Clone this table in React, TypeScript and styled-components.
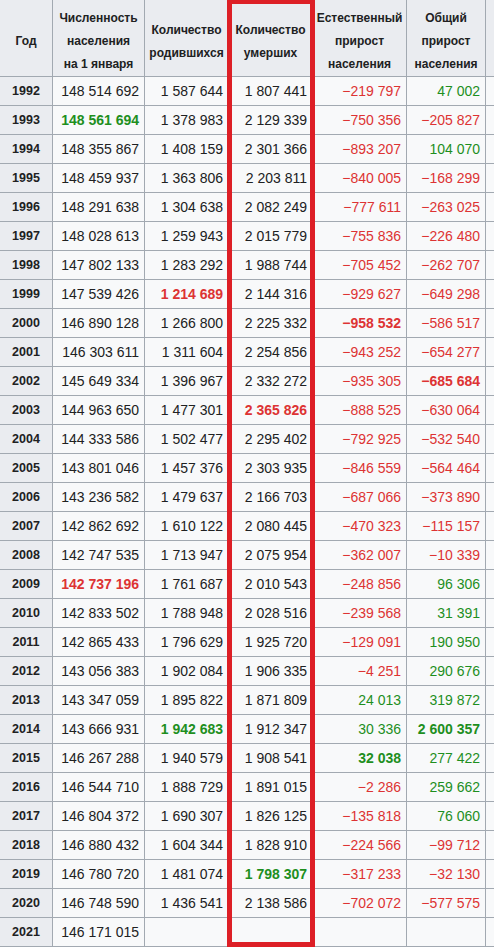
import React from 'react';
import styled, { createGlobalStyle } from 'styled-components';

const GlobalStyle = createGlobalStyle`
  html, body {
    margin: 0;
    padding: 0;
    background: #fff;
    overflow: hidden;
  }
  body {
    font-family: "Liberation Sans", Arial, sans-serif;
    color: #202122;
  }
`;

const Page = styled.div`
  position: relative;
  width: 494px;
  height: 948px;
  overflow: hidden;
`;

const Table = styled.div`
  display: grid;
  grid-template-columns: 52px 91px 83px 83px 93px 78px 90px;
  grid-template-rows: 76px;
  grid-auto-rows: 28px;
  gap: 1px;
  width: max-content;
  background: #a2a9b1;
  border: 1px solid #a2a9b1;
  margin: -1px 0 0 -1px;
`;

const HeadCell = styled.div`
  display: flex;
  align-items: center;
  justify-content: center;
  padding: 7px 4px 0;
  background: #eaecf0;
  font-size: 12px;
  font-weight: 700;
  line-height: 23px;
  text-align: center;
  white-space: nowrap;
`;

const YearCell = styled.div`
  display: flex;
  align-items: center;
  justify-content: center;
  background: #eaecf0;
  font-size: 12.5px;
  font-weight: 700;
`;

const NumCell = styled.div<{ $tone?: 'red' | 'green'; $bold?: boolean }>`
  display: flex;
  align-items: center;
  justify-content: flex-end;
  padding: 0 5px;
  background: #f8f9fa;
  font-size: 14px;
  white-space: nowrap;
  font-weight: ${p => (p.$bold ? 700 : 400)};
  color: ${p => (p.$tone === 'red' ? '#d33' : p.$tone === 'green' ? '#1e8f1e' : '#202122')};
`;

// annotation drawn over the deaths column
const Highlight = styled.div`
  position: absolute;
  left: 227px;
  top: -1px;
  width: 88px;
  height: 948px;
  box-sizing: border-box;
  border: 5px solid #dd1f26;
  pointer-events: none;
`;

const headers: string[][] = [
  ['Год'],
  ['Численность', 'населения', 'на 1 января'],
  ['Количество', 'родившихся'],
  ['Количество', 'умерших'],
  ['Естественный', 'прирост', 'населения'],
  ['Общий', 'прирост', 'населения'],
  [],
];

// "!g" / "!r" prefix = bold green / bold red
const rows: string[][] = [
  ['1992', '148 514 692', '1 587 644', '1 807 441', '−219 797', '47 002'],
  ['1993', '!g148 561 694', '1 378 983', '2 129 339', '−750 356', '−205 827'],
  ['1994', '148 355 867', '1 408 159', '2 301 366', '−893 207', '104 070'],
  ['1995', '148 459 937', '1 363 806', '2 203 811', '−840 005', '−168 299'],
  ['1996', '148 291 638', '1 304 638', '2 082 249', '−777 611', '−263 025'],
  ['1997', '148 028 613', '1 259 943', '2 015 779', '−755 836', '−226 480'],
  ['1998', '147 802 133', '1 283 292', '1 988 744', '−705 452', '−262 707'],
  ['1999', '147 539 426', '!r1 214 689', '2 144 316', '−929 627', '−649 298'],
  ['2000', '146 890 128', '1 266 800', '2 225 332', '!r−958 532', '−586 517'],
  ['2001', '146 303 611', '1 311 604', '2 254 856', '−943 252', '−654 277'],
  ['2002', '145 649 334', '1 396 967', '2 332 272', '−935 305', '!r−685 684'],
  ['2003', '144 963 650', '1 477 301', '!r2 365 826', '−888 525', '−630 064'],
  ['2004', '144 333 586', '1 502 477', '2 295 402', '−792 925', '−532 540'],
  ['2005', '143 801 046', '1 457 376', '2 303 935', '−846 559', '−564 464'],
  ['2006', '143 236 582', '1 479 637', '2 166 703', '−687 066', '−373 890'],
  ['2007', '142 862 692', '1 610 122', '2 080 445', '−470 323', '−115 157'],
  ['2008', '142 747 535', '1 713 947', '2 075 954', '−362 007', '−10 339'],
  ['2009', '!r142 737 196', '1 761 687', '2 010 543', '−248 856', '96 306'],
  ['2010', '142 833 502', '1 788 948', '2 028 516', '−239 568', '31 391'],
  ['2011', '142 865 433', '1 796 629', '1 925 720', '−129 091', '190 950'],
  ['2012', '143 056 383', '1 902 084', '1 906 335', '−4 251', '290 676'],
  ['2013', '143 347 059', '1 895 822', '1 871 809', '24 013', '319 872'],
  ['2014', '143 666 931', '!g1 942 683', '1 912 347', '30 336', '!g2 600 357'],
  ['2015', '146 267 288', '1 940 579', '1 908 541', '!g32 038', '277 422'],
  ['2016', '146 544 710', '1 888 729', '1 891 015', '−2 286', '259 662'],
  ['2017', '146 804 372', '1 690 307', '1 826 125', '−135 818', '76 060'],
  ['2018', '146 880 432', '1 604 344', '1 828 910', '−224 566', '−99 712'],
  ['2019', '146 780 720', '1 481 074', '!g1 798 307', '−317 233', '−32 130'],
  ['2020', '146 748 590', '1 436 541', '2 138 586', '−702 072', '−577 575'],
  ['2021', '146 171 015', '', '', '', ''],
];

const renderCell = (raw: string, col: number, key: string) => {
  let value = raw;
  let bold = false;
  let tone: 'red' | 'green' | undefined;
  if (value.startsWith('!')) {
    bold = true;
    tone = value[1] === 'r' ? 'red' : 'green';
    value = value.slice(2);
  }
  // growth columns are coloured by sign
  if (col >= 4 && value) tone = value.startsWith('−') ? 'red' : 'green';
  return (
    <NumCell key={key} $tone={tone} $bold={bold}>
      {value}
    </NumCell>
  );
};

const App: React.FC = () => (
  <Page>
    <GlobalStyle />
    <Table>
      {headers.map((lines, i) => (
        <HeadCell key={`h${i}`}>
          <div>
            {lines.map((l, j) => (
              <div key={j}>{l}</div>
            ))}
          </div>
        </HeadCell>
      ))}
      {rows.map(row => (
        <React.Fragment key={row[0]}>
          <YearCell>{row[0]}</YearCell>
          {row.slice(1).map((v, i) => renderCell(v, i + 1, `${row[0]}-${i}`))}
          <NumCell />
        </React.Fragment>
      ))}
    </Table>
    <Highlight />
  </Page>
);

export default App;
